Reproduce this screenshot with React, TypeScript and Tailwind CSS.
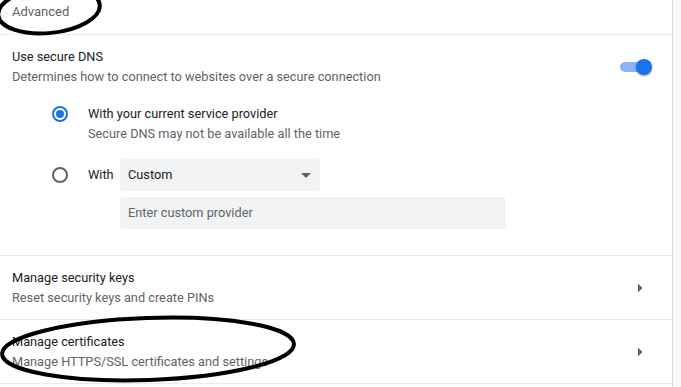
import { ReactNode } from 'react';

function Radio({ checked }: { checked: boolean }) {
  return (
    <span
      className={`flex h-4 w-4 shrink-0 items-center justify-center rounded-full border-2 ${
        checked ? 'border-[#1a73e8]' : 'border-[#5f6368]'
      }`}
    >
      {checked && <span className="h-2 w-2 rounded-full bg-[#1a73e8]" />}
    </span>
  );
}

function ArrowRight() {
  return (
    <svg width="20" height="20" viewBox="0 0 20 20" className="shrink-0">
      <path d="M8 5.5 L12.5 10 L8 14.5 Z" fill="#5f6368" />
    </svg>
  );
}

function LinkRow({ title, subtitle }: { title: string; subtitle: string }) {
  return (
    <div className="flex h-[64px] items-center justify-between border-b border-[#e8eaed] pl-3 pr-[22px] pt-[1px]">
      <div className="flex flex-col">
        <span className="leading-5 text-[#202124]">{title}</span>
        <span className="leading-5 text-[#5f6368]">{subtitle}</span>
      </div>
      <ArrowRight />
    </div>
  );
}

function Option({ radio, children }: { radio: boolean; children: ReactNode }) {
  return (
    <div className="flex items-start">
      <div className="flex h-5 w-[88px] shrink-0 items-center justify-end pr-[20px]">
        <Radio checked={radio} />
      </div>
      {children}
    </div>
  );
}

export default function App() {
  return (
    <div
      className="relative flex h-[387px] w-[681px] overflow-hidden bg-[#f8f9fa] text-[12.75px]"
      style={{ fontFamily: 'Roboto, "Liberation Sans", sans-serif' }}
    >
      {/* Settings card */}
      <div className="flex w-[673px] flex-col border-r border-[#dadce0] bg-white">
        {/* Header */}
        <div className="h-[35px] border-b border-[#e8eaed] px-3 pt-[3px] text-[13px] leading-[18px] text-[#5f6368]">
          Advanced
        </div>

        {/* Secure DNS */}
        <div className="flex flex-col border-b border-[#e8eaed] pb-[26px]">
          <div className="flex items-center justify-between pl-3 pr-[20px] pt-[12px]">
            <div className="flex flex-col">
              <span className="leading-5 text-[#202124]">Use secure DNS</span>
              <span className="leading-5 text-[#5f6368]">
                Determines how to connect to websites over a secure connection
              </span>
            </div>
            <div className="relative flex h-4 w-[32px] items-center">
              <span className="h-[10px] w-[26px] rounded-full bg-[#8ab4f8]" />
              <span className="absolute right-0 h-4 w-4 rounded-full bg-[#1a73e8] shadow-[0_1px_2px_rgba(0,0,0,0.4)]" />
            </div>
          </div>

          <div className="mt-[17px] flex flex-col gap-[15px]">
            <Option radio>
              <div className="flex flex-col">
                <span className="leading-5 text-[#202124]">With your current service provider</span>
                <span className="leading-5 text-[#5f6368]">Secure DNS may not be available all the time</span>
              </div>
            </Option>

            <div className="flex items-start">
              <div className="flex h-8 w-[88px] shrink-0 items-center justify-end pr-[20px]">
                <Radio checked={false} />
              </div>
              <div className="flex flex-col gap-[6px]">
                <div className="flex items-center">
                  <span className="w-8 leading-8 text-[#202124]">With</span>
                  <div className="flex h-8 w-[200px] items-center justify-between rounded-[4px] bg-[#f1f3f4] pl-2 pr-[9px]">
                    <span className="text-[#202124]">Custom</span>
                    <svg width="10" height="5" viewBox="0 0 10 5">
                      <path d="M0 0 L10 0 L5 5 Z" fill="#5f6368" />
                    </svg>
                  </div>
                </div>
                <div className="ml-8 flex h-8 w-[386px] items-center rounded-[4px] bg-[#f1f3f4] px-2 text-[#5f6368]">
                  Enter custom provider
                </div>
              </div>
            </div>
          </div>
        </div>

        <LinkRow title="Manage security keys" subtitle="Reset security keys and create PINs" />
        <LinkRow title="Manage certificates" subtitle="Manage HTTPS/SSL certificates and settings" />
      </div>

      {/* Hand-drawn annotations */}
      <svg className="pointer-events-none absolute left-0 top-0" width="681" height="387" viewBox="0 0 681 387">
        <ellipse cx="49" cy="10" rx="51" ry="23" transform="rotate(-6 49 10)" fill="none" stroke="#000" strokeWidth="4" />
        <ellipse cx="148" cy="349" rx="146" ry="31" transform="rotate(-2 148 349)" fill="none" stroke="#000" strokeWidth="4" />
      </svg>
    </div>
  );
}
